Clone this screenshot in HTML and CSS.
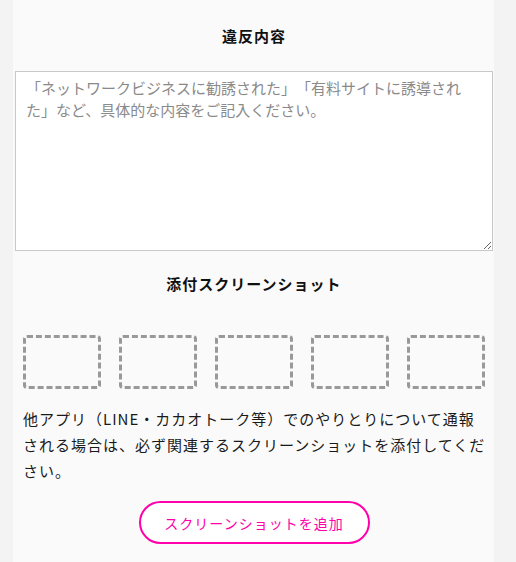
FILE: index.html
```html
<!DOCTYPE html>
<html lang="ja">

<head>
    <meta charset="UTF-8">
    <meta name="viewport" content="width=device-width, initial-scale=1.0">
    <title>通報フォーム</title>
    <link rel="stylesheet" href="styles.css">
</head>

<body>
    <div class="panel">
        <h2 class="title">違反内容</h2>
        <textarea class="detail" placeholder="「ネットワークビジネスに勧誘された」「有料サイトに誘導された」など、具体的な内容をご記入ください。"></textarea>

        <h2 class="title title-shot">添付スクリーンショット</h2>
        <div class="shots">
            <div class="shot"></div>
            <div class="shot"></div>
            <div class="shot"></div>
            <div class="shot"></div>
            <div class="shot"></div>
        </div>
        <p class="note">他アプリ（LINE・カカオトーク等）でのやりとりについて通報される場合は、必ず関連するスクリーンショットを添付してください。</p>
        <div class="actions">
            <button class="add">スクリーンショットを追加</button>
        </div>
    </div>
</body>

</html>
```

FILE: styles.css
```css
* {
    margin: 0;
    padding: 0;
    box-sizing: border-box;
}

body {
    background: #f3f3f3;
    font-family: "Noto Sans CJK JP", "Noto Sans", sans-serif;
    color: #1a1a1a;
    text-spacing-trim: space-all;
}

.panel {
    width: 481px;
    min-height: 562px;
    margin-left: 13px;
    padding: 0 1px 0 2px;
    background: #fafafa;
}

.title {
    padding: 24px 0 23px;
    font-size: 15px;
    line-height: 24px;
    font-weight: bold;
    letter-spacing: 1px;
    text-align: center;
    color: #111;
}

.title-shot {
    padding: 21px 0 39px;
}

.detail {
    display: block;
    width: 100%;
    height: 180px;
    padding: 5px 10px;
    border: 1px solid #c8c8c8;
    background: #fff;
    font-family: inherit;
    font-size: 15px;
    line-height: 22px;
    color: #333;
}

.detail::placeholder {
    color: #8a8a8a;
}

.shots {
    display: flex;
    justify-content: space-between;
    padding: 0 8px;
}

.shot {
    width: 78px;
    height: 54px;
    border: 3px dashed #999;
    border-radius: 4px;
}

.note {
    padding: 17px 4px 0 8px;
    font-size: 15px;
    line-height: 26px;
    letter-spacing: 1px;
}

.actions {
    display: flex;
    justify-content: center;
    padding-top: 17px;
}

.add {
    width: 231px;
    height: 43px;
    border: 2px solid #f0a;
    border-radius: 22px;
    background: #fff;
    color: #f0a;
    font-family: inherit;
    font-size: 14px;
    letter-spacing: 1px;
}
```
